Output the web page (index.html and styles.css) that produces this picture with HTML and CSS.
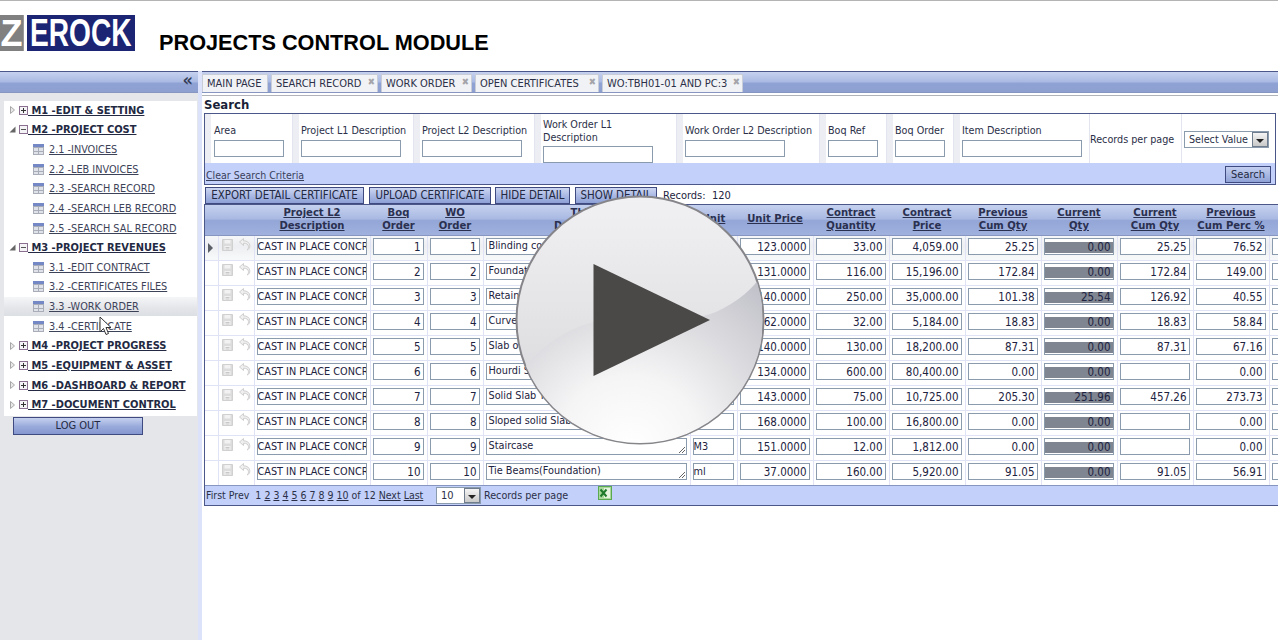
FILE: index.html
```html
<!DOCTYPE html>
<html lang="en">
<head>
<meta charset="utf-8">
<title>Projects Control Module</title>
<link rel="stylesheet" href="styles.css">
</head>
<body>
<svg class="defs" width="0" height="0" aria-hidden="true">
  <symbol id="i-table" viewBox="0 0 11 11"><rect width="11" height="11" fill="#a9adb8"/><rect width="11" height="3" fill="#7388c4"/><path d="M1 4h4v3H1zM6 4h4v3H6zM1 8h4v2H1zM6 8h4v2H6z" fill="#dfe2e8"/></symbol>
  <symbol id="i-plus" viewBox="0 0 9 9"><rect x=".5" y=".5" width="8" height="8" fill="#f4f4f6" stroke="#8b6f90"/><path d="M2 4.500h5M4.500 2v5" stroke="#333" stroke-width="1"/></symbol>
  <symbol id="i-minus" viewBox="0 0 9 9"><rect x=".5" y=".5" width="8" height="8" fill="#f4f4f6" stroke="#8b6f90"/><path d="M2 4.500h5" stroke="#555" stroke-width="1"/></symbol>
  <symbol id="i-closed" viewBox="0 0 5 8"><path d="M.5.5 4.500 4 .5 7.500z" fill="#e8e8e8" stroke="#a8a8a8"/></symbol>
  <symbol id="i-open" viewBox="0 0 7 7"><path d="M6.500.5v6h-6z" fill="#666"/></symbol>
  <symbol id="i-save" viewBox="0 0 11 12"><path d="M.5.5h10v11H.5z" fill="#dcdcdc" stroke="#d0d0d0"/><path d="M2.500 1h6v3.500h-6zM2.500 7h6v4h-6z" fill="#f2f2f2"/><path d="M3.500 8.500h4M3.500 10h4" stroke="#c8c8c8"/></symbol>
  <symbol id="i-undo" viewBox="0 0 13 14"><path d="M5.500 1.500 1.500 5l4 3.500V6.200c3 0 4.800 1 5 3.500.1 1.500-.6 2.700-1.500 3.300 2-.6 3-2.300 2.800-4.300C11.500 5.500 9 3.800 5.500 3.800z" fill="#f0f0f0" stroke="#cfcfcf"/></symbol>
  <symbol id="i-arrow" viewBox="0 0 5 10"><path d="M0 0l5 5-5 5z" fill="#5a5e66"/></symbol>
  <symbol id="i-grip" viewBox="0 0 9 9"><path d="M8 2 2 8M8 5 5 8" stroke="#666" stroke-width="1"/></symbol>
</svg>

<header class="top">
  <div class="logo"><span class="logo-z">Z</span><span class="logo-rest"><span class="logo-word">EROCK</span></span></div>
  <h1 class="title">PROJECTS CONTROL MODULE</h1>
</header>

<div class="app">
  <aside class="side">
    <div class="side-head">&laquo;</div>
    <nav class="tree">
      <a class="mod"><svg class="exp"><use href="#i-closed"/></svg><svg class="box"><use href="#i-plus"/></svg><span>&nbsp;M1 -EDIT &amp; SETTING</span></a>
      <a class="mod"><svg class="exp exp-o"><use href="#i-open"/></svg><svg class="box"><use href="#i-minus"/></svg><span>&nbsp;M2 -PROJECT COST</span></a>
      <a class="sub"><svg class="ti"><use href="#i-table"/></svg><span>2.1 -INVOICES</span></a>
      <a class="sub"><svg class="ti"><use href="#i-table"/></svg><span>2.2 -LEB INVOICES</span></a>
      <a class="sub"><svg class="ti"><use href="#i-table"/></svg><span>2.3 -SEARCH RECORD</span></a>
      <a class="sub"><svg class="ti"><use href="#i-table"/></svg><span>2.4 -SEARCH LEB RECORD</span></a>
      <a class="sub"><svg class="ti"><use href="#i-table"/></svg><span>2.5 -SEARCH SAL RECORD</span></a>
      <a class="mod"><svg class="exp exp-o"><use href="#i-open"/></svg><svg class="box"><use href="#i-minus"/></svg><span>&nbsp;M3 -PROJECT REVENUES</span></a>
      <a class="sub"><svg class="ti"><use href="#i-table"/></svg><span>3.1 -EDIT CONTRACT</span></a>
      <a class="sub"><svg class="ti"><use href="#i-table"/></svg><span>3.2 -CERTIFICATES FILES</span></a>
      <a class="sub hover"><svg class="ti"><use href="#i-table"/></svg><span>3.3 -WORK ORDER</span></a>
      <a class="sub"><svg class="ti"><use href="#i-table"/></svg><span>3.4 -CERTIFICATE</span></a>
      <a class="mod"><svg class="exp"><use href="#i-closed"/></svg><svg class="box"><use href="#i-plus"/></svg><span>&nbsp;M4 -PROJECT PROGRESS</span></a>
      <a class="mod"><svg class="exp"><use href="#i-closed"/></svg><svg class="box"><use href="#i-plus"/></svg><span>&nbsp;M5 -EQUIPMENT &amp; ASSET</span></a>
      <a class="mod"><svg class="exp"><use href="#i-closed"/></svg><svg class="box"><use href="#i-plus"/></svg><span>&nbsp;M6 -DASHBOARD &amp; REPORT</span></a>
      <a class="mod"><svg class="exp"><use href="#i-closed"/></svg><svg class="box"><use href="#i-plus"/></svg><span>&nbsp;M7 -DOCUMENT CONTROL</span></a>
    </nav>
    <div class="logout">LOG OUT</div>
  </aside>
  <div class="split"></div>

  <main class="main">
    <div class="tabs">
      <div class="tab t1">MAIN PAGE</div>
      <div class="tab t2">SEARCH RECORD<b class="x">&#10006;</b></div>
      <div class="tab t3">WORK ORDER<b class="x">&#10006;</b></div>
      <div class="tab t4">OPEN CERTIFICATES<b class="x">&#10006;</b></div>
      <div class="tab t5 active">WO:TBH01-01 AND PC:3<b class="x">&#10006;</b></div>
    </div>
    <div class="tabline"></div>

    <div class="content">
      <h2 class="search-title">Search</h2>
      <section class="search">
        <div class="filters">
          <div class="f"><label>Area</label><div class="in w70"></div></div>
          <div class="f"><label>Project L1 Description</label><div class="in w100"></div></div>
          <div class="f"><label>Project L2 Description</label><div class="in w100"></div></div>
          <div class="f f-low"><label>Work Order L1 Description</label><div class="in w110"></div></div>
          <div class="f"><label>Work Order L2 Description</label><div class="in w100"></div></div>
          <div class="f"><label>Boq Ref</label><div class="in w50"></div></div>
          <div class="f"><label>Boq Order</label><div class="in w50"></div></div>
          <div class="f"><label>Item Description</label><div class="in w120"></div></div>
          <div class="f-plain">Records per page</div>
          <div class="f-plain f-sel"><div class="sel"><span>Select Value</span><i class="sel-btn"></i></div></div>
        </div>
        <div class="search-foot"><a class="clear">Clear Search Criteria</a><div class="btn btn-search">Search</div></div>
      </section>

      <div class="actions">
        <div class="btn b1">EXPORT DETAIL CERTIFICATE</div>
        <div class="btn b2">UPLOAD CERTIFICATE</div>
        <div class="btn b3">HIDE DETAIL</div>
        <div class="btn b4">SHOW DETAIL</div>
        <span class="records">Records:&nbsp; 120</span>
      </div>

      <section class="grid">
        <table class="tbl">
          <colgroup><col class="c0"><col class="c1"><col class="c2"><col class="c3"><col class="c4"><col class="c5"><col class="c6"><col class="c7"><col class="c7"><col class="c7"><col class="c7"><col class="c7"><col class="c7"><col class="c7"><col class="c8"></colgroup>
          <thead><tr>
            <th></th><th></th><th><u>Project L2 <br>Description</u></th><th><u>Boq<br>Order</u></th><th><u>WO<br>Order</u></th><th><u>Thing<br>Description</u></th><th class="th-unit"><u>Unit</u></th><th><u>Unit Price</u></th><th><u>Contract <br>Quantity</u></th><th><u>Contract <br>Price</u></th><th><u>Previous <br>Cum Qty</u></th><th><u>Current <br>Qty</u></th><th><u>Current <br>Cum Qty</u></th><th><u>Previous <br>Cum Perc %</u></th><th></th>
          </tr></thead>
          <tbody>
            <tr class="sel-row"><td class="ar"><svg class="arw"><use href="#i-arrow"/></svg></td><td class="ic"><svg class="sv"><use href="#i-save"/></svg><svg class="un"><use href="#i-undo"/></svg></td><td><div class="fd fl">CAST IN PLACE CONCRETE</div></td><td><div class="fd">1</div></td><td><div class="fd">1</div></td><td><div class="fd ta">Blinding concrete<svg class="grip"><use href="#i-grip"/></svg></div></td><td><div class="fd fl"></div></td><td><div class="fd">123.0000</div></td><td><div class="fd">33.00</div></td><td><div class="fd">4,059.00</div></td><td><div class="fd">25.25</div></td><td><div class="fd cur">0.00</div></td><td><div class="fd">25.25</div></td><td><div class="fd">76.52</div></td><td><div class="fd"></div></td></tr>
            <tr><td></td><td class="ic"><svg class="sv"><use href="#i-save"/></svg><svg class="un"><use href="#i-undo"/></svg></td><td><div class="fd fl">CAST IN PLACE CONCRETE</div></td><td><div class="fd">2</div></td><td><div class="fd">2</div></td><td><div class="fd ta">Foundation<svg class="grip"><use href="#i-grip"/></svg></div></td><td><div class="fd fl"></div></td><td><div class="fd">131.0000</div></td><td><div class="fd">116.00</div></td><td><div class="fd">15,196.00</div></td><td><div class="fd">172.84</div></td><td><div class="fd cur">0.00</div></td><td><div class="fd">172.84</div></td><td><div class="fd">149.00</div></td><td><div class="fd"></div></td></tr>
            <tr><td></td><td class="ic"><svg class="sv"><use href="#i-save"/></svg><svg class="un"><use href="#i-undo"/></svg></td><td><div class="fd fl">CAST IN PLACE CONCRETE</div></td><td><div class="fd">3</div></td><td><div class="fd">3</div></td><td><div class="fd ta">Retaining<svg class="grip"><use href="#i-grip"/></svg></div></td><td><div class="fd fl"></div></td><td><div class="fd">140.0000</div></td><td><div class="fd">250.00</div></td><td><div class="fd">35,000.00</div></td><td><div class="fd">101.38</div></td><td><div class="fd cur">25.54</div></td><td><div class="fd">126.92</div></td><td><div class="fd">40.55</div></td><td><div class="fd"></div></td></tr>
            <tr><td></td><td class="ic"><svg class="sv"><use href="#i-save"/></svg><svg class="un"><use href="#i-undo"/></svg></td><td><div class="fd fl">CAST IN PLACE CONCRETE</div></td><td><div class="fd">4</div></td><td><div class="fd">4</div></td><td><div class="fd ta">Curved<svg class="grip"><use href="#i-grip"/></svg></div></td><td><div class="fd fl"></div></td><td><div class="fd">162.0000</div></td><td><div class="fd">32.00</div></td><td><div class="fd">5,184.00</div></td><td><div class="fd">18.83</div></td><td><div class="fd cur">0.00</div></td><td><div class="fd">18.83</div></td><td><div class="fd">58.84</div></td><td><div class="fd"></div></td></tr>
            <tr><td></td><td class="ic"><svg class="sv"><use href="#i-save"/></svg><svg class="un"><use href="#i-undo"/></svg></td><td><div class="fd fl">CAST IN PLACE CONCRETE</div></td><td><div class="fd">5</div></td><td><div class="fd">5</div></td><td><div class="fd ta">Slab on<svg class="grip"><use href="#i-grip"/></svg></div></td><td><div class="fd fl"></div></td><td><div class="fd">140.0000</div></td><td><div class="fd">130.00</div></td><td><div class="fd">18,200.00</div></td><td><div class="fd">87.31</div></td><td><div class="fd cur">0.00</div></td><td><div class="fd">87.31</div></td><td><div class="fd">67.16</div></td><td><div class="fd"></div></td></tr>
            <tr><td></td><td class="ic"><svg class="sv"><use href="#i-save"/></svg><svg class="un"><use href="#i-undo"/></svg></td><td><div class="fd fl">CAST IN PLACE CONCRETE</div></td><td><div class="fd">6</div></td><td><div class="fd">6</div></td><td><div class="fd ta">Hourdi S<svg class="grip"><use href="#i-grip"/></svg></div></td><td><div class="fd fl"></div></td><td><div class="fd">134.0000</div></td><td><div class="fd">600.00</div></td><td><div class="fd">80,400.00</div></td><td><div class="fd">0.00</div></td><td><div class="fd cur">0.00</div></td><td><div class="fd"></div></td><td><div class="fd">0.00</div></td><td><div class="fd"></div></td></tr>
            <tr><td></td><td class="ic"><svg class="sv"><use href="#i-save"/></svg><svg class="un"><use href="#i-undo"/></svg></td><td><div class="fd fl">CAST IN PLACE CONCRETE</div></td><td><div class="fd">7</div></td><td><div class="fd">7</div></td><td><div class="fd ta">Solid Slab T<svg class="grip"><use href="#i-grip"/></svg></div></td><td><div class="fd fl"></div></td><td><div class="fd">143.0000</div></td><td><div class="fd">75.00</div></td><td><div class="fd">10,725.00</div></td><td><div class="fd">205.30</div></td><td><div class="fd cur">251.96</div></td><td><div class="fd">457.26</div></td><td><div class="fd">273.73</div></td><td><div class="fd"></div></td></tr>
            <tr><td></td><td class="ic"><svg class="sv"><use href="#i-save"/></svg><svg class="un"><use href="#i-undo"/></svg></td><td><div class="fd fl">CAST IN PLACE CONCRETE</div></td><td><div class="fd">8</div></td><td><div class="fd">8</div></td><td><div class="fd ta">Sloped solid Slab<svg class="grip"><use href="#i-grip"/></svg></div></td><td><div class="fd fl"></div></td><td><div class="fd">168.0000</div></td><td><div class="fd">100.00</div></td><td><div class="fd">16,800.00</div></td><td><div class="fd">0.00</div></td><td><div class="fd cur">0.00</div></td><td><div class="fd"></div></td><td><div class="fd">0.00</div></td><td><div class="fd"></div></td></tr>
            <tr><td></td><td class="ic"><svg class="sv"><use href="#i-save"/></svg><svg class="un"><use href="#i-undo"/></svg></td><td><div class="fd fl">CAST IN PLACE CONCRETE</div></td><td><div class="fd">9</div></td><td><div class="fd">9</div></td><td><div class="fd ta">Staircase<svg class="grip"><use href="#i-grip"/></svg></div></td><td><div class="fd fl">M3</div></td><td><div class="fd">151.0000</div></td><td><div class="fd">12.00</div></td><td><div class="fd">1,812.00</div></td><td><div class="fd">0.00</div></td><td><div class="fd cur">0.00</div></td><td><div class="fd"></div></td><td><div class="fd">0.00</div></td><td><div class="fd"></div></td></tr>
            <tr><td></td><td class="ic"><svg class="sv"><use href="#i-save"/></svg><svg class="un"><use href="#i-undo"/></svg></td><td><div class="fd fl">CAST IN PLACE CONCRETE</div></td><td><div class="fd">10</div></td><td><div class="fd">10</div></td><td><div class="fd ta">Tie Beams(Foundation)<svg class="grip"><use href="#i-grip"/></svg></div></td><td><div class="fd fl">ml</div></td><td><div class="fd">37.0000</div></td><td><div class="fd">160.00</div></td><td><div class="fd">5,920.00</div></td><td><div class="fd">91.05</div></td><td><div class="fd cur">0.00</div></td><td><div class="fd">91.05</div></td><td><div class="fd">56.91</div></td><td><div class="fd"></div></td></tr>
          </tbody>
        </table>
        <div class="pager">
          <span class="pg">First Prev&nbsp; 1 <u>2</u> <u>3</u> <u>4</u> <u>5</u> <u>6</u> <u>7</u> <u>8</u> <u>9</u> <u>10</u> of 12 <u>Next</u> <u>Last</u></span>
          <div class="sel sel-pg"><span>10</span><i class="sel-btn"></i></div>
          <span class="pg-rec">Records per page</span>
          <svg class="xl" viewBox="0 0 14 14" width="14" height="14"><rect width="14" height="14" fill="#5aa84f"/><rect x="1" y="1" width="12" height="12" fill="#a9d79c"/><rect x="6" y="2" width="6" height="10" fill="#e6f4df"/><path d="M2.500 3.500l6 7M8.500 3.500l-6 7" stroke="#1f7a2c" stroke-width="2"/></svg>
        </div>
      </section>
    </div>
  </main>
</div>

<svg class="cursor" viewBox="0 0 13 20" width="13" height="20"><path d="M1 1v15l3.500-3.500 2.500 6 2.500-1-2.500-6H12z" fill="#fff" stroke="#333"/></svg>

<svg class="play" viewBox="0 0 256 256" width="256" height="256">
  <defs>
    <linearGradient id="pg1" x1="0" y1="0" x2="0" y2="1"><stop offset="0" stop-color="#f1f1f3"/><stop offset=".55" stop-color="#e2e2e5"/><stop offset="1" stop-color="#d4d4d9"/></linearGradient>
    <radialGradient id="pg2" gradientUnits="userSpaceOnUse" cx="118" cy="256" r="240"><stop offset="0" stop-color="#ffffff"/><stop offset=".3" stop-color="#f5f5f6"/><stop offset=".68" stop-color="#d2d2d7"/><stop offset="1" stop-color="#b4b4c0"/></radialGradient>
    <clipPath id="pc"><circle cx="128" cy="128" r="123"/></clipPath>
  </defs>
  <circle cx="128" cy="128" r="123.500" fill="url(#pg1)" stroke="#85858a" stroke-width="2"/>
  <path clip-path="url(#pc)" d="M14 174C38 146 62 134 90 128c35-4 86 4 114-8 22-10 38-24 46-38V256H0V188z" fill="url(#pg2)"/>
  <path d="M81.500 72 198 128 81.500 184z" fill="#4a4947"/>
</svg>
</body>
</html>
```

FILE: styles.css
```css
* { box-sizing: border-box; }
html, body { margin: 0; height: 640px; overflow: hidden; }
body {
  font-family: "DejaVu Sans Condensed", "DejaVu Sans", sans-serif;
  font-size: 11px;
  color: #1d2340;
  background: #fff;
  position: relative;
}
.defs { position: absolute; }

/* header */
.top {
  height: 71px;
  border-top: 1px solid #b4b4b4;
  display: flex;
  padding-top: 14px;
}
.logo { display: flex; height: 36px; width: 135px; gap: 3px; font-family: "Liberation Sans", sans-serif; font-weight: 700; color: #fff; font-size: 38px; line-height: 37px; flex: none; }
.logo-z { width: 24px; flex: none; background: #808080; text-align: center; border-right: 1px solid #9a9a9a; font-size: 36px; }
.logo-rest { width: 108px; flex: none; background: #1c2474; padding-left: 3px; }
.logo-word { display: block; width: 102px; transform: scaleX(.74); transform-origin: left center; }
.title { margin: 15px 0 0 24px; font-family: "Liberation Sans", sans-serif; font-weight: 700; font-size: 21.700px; line-height: 26px; color: #000; white-space: nowrap; }

.app { display: flex; height: 569px; }

/* sidebar */
.side { width: 198px; background: #e4e6e9; flex: none; }
.side-head {
  height: 22px;
  border-top: 1px solid #4a5788;
  border-bottom: 1px solid #8696c0;
  background: linear-gradient(#c6d1ef, #a9b9e2 50%, #8fa2d4 55%, #8ea0d0);
  text-align: right;
  padding-right: 5px;
  font-size: 18px;
  line-height: 16px;
  color: #333c58;
  font-weight: 700;
}
.tree { margin: 8px 1px 0 4px; background: #fff; height: 314.500px; }
.mod, .sub { display: flex; align-items: center; height: 19.640px; white-space: nowrap; position: relative; top: -.5px; }
.mod span { font-weight: 700; font-size: 11px; text-decoration: underline; color: #232942; }
.sub { padding-left: 29px; color: #3c4258; }
.sub span { text-decoration: underline; margin-left: 5px; font-size: 10.800px; }
.sub.hover { background: linear-gradient(#f5f6f7, #e3e5e9 60%, #dcdfe4); }
.exp { width: 5px; height: 8px; margin-left: 6px; }
.exp-o { width: 7px; height: 7px; margin-left: 5px; margin-right: -1px; }
.box { width: 9px; height: 9px; margin-left: 4px; }
.ti { width: 11px; height: 11px; }
.logout {
  margin: 1px 0 0 13px;
  width: 130px;
  height: 18px;
  border: 1px solid #3e4a80;
  background: linear-gradient(#c6d1ef, #98a9da 55%, #8497cf);
  text-align: center;
  line-height: 16px;
  color: #232942;
}
.split { width: 4px; flex: none; background: #dbe2fa; }

/* main */
.main { flex: 1; min-width: 0; overflow: hidden; }
.tabs {
  height: 22px;
  display: flex;
  align-items: flex-end;
  border-top: 1px solid #4a5788;
  border-bottom: 1px solid #8696c0;
  background: linear-gradient(#c6d1ef, #a9b9e2 50%, #8fa2d4 55%, #8ea0d0);
  gap: 3px;
  padding-top: 2px;
}
.tab {
  height: 18px;
  padding-left: 4px;
  background: #f1f2f5;
  border: 1px solid #c8cdd8;
  border-bottom: 0;
  line-height: 18px;
  position: relative;
  white-space: nowrap;
  color: #2b3048;
}
.t1 { width: 66px; } .t2 { width: 107px; } .t3 { width: 91px; } .t4 { width: 124px; } .t5 { width: 141px; }
.x { position: absolute; right: 2px; top: -2px; font-size: 9.500px; color: #a4a4aa; font-weight: 400; }
.tabline { height: 3px; border-bottom: 1px solid #b0b3b8; }
.content { padding-left: 2px; width: 1080px; }
.search-title { margin: 0; padding-top: 1px; font-size: 13px; line-height: 16px; font-weight: 700; color: #1a1f38; }

/* search */
.search { width: 1072px; border: 1px solid #4a5788; }
.filters { display: grid; grid-template-columns: 87px 121px 121px 142px 143px 67px 67px 136px 92px 93px; height: 49px; }
.f {
  padding: 11px 0 0 8px;
  display: flex;
  flex-direction: column;
  gap: 3px;
  background: linear-gradient(90deg, #eceef4 0 6px, transparent 6px);
  border-left: 1px solid #e2e5ef;
  min-width: 0;
}
.f:first-child { border-left: 0; padding-left: 9px; }
.f label { font-size: 10.700px; line-height: 12px; color: #2b3048; white-space: nowrap; }
.f-low { padding-top: 4px; gap: 2px; }
.f-low label { white-space: normal; line-height: 13px; width: 120px; }
.in { height: 17px; border: 1px solid #8a9bae; background: #fff; flex: none; }
.w50 { width: 50px; } .w70 { width: 70px; } .w100 { width: 100px; } .w110 { width: 110px; } .w120 { width: 120px; }
.f-plain { display: flex; align-items: center; padding-top: 1px; border-left: 1px solid #e2e5ef; white-space: nowrap; color: #2b3048; font-size: 10.700px; }
.f-sel { padding-left: 2px; padding-top: 2px; }
.sel { display: flex; align-items: center; justify-content: space-between; width: 85px; height: 17px; border: 1px solid #8a9bae; background: #fff; padding-left: 4px; }
.sel-btn { width: 16px; height: 15px; background: linear-gradient(#f4f4f4, #c9c9c9); border: 1px solid #6f7c8e; position: relative; flex: none; }
.sel-btn::after { content: ""; position: absolute; left: 3px; top: 6px; border-style: solid; border-color: #222 transparent transparent; border-width: 4px 4px 0; }
.search-foot { height: 21px; background: #c3d0f9; display: flex; align-items: center; justify-content: space-between; padding: 1px 4px 0 1px; }
.clear { text-decoration: underline; color: #39405c; font-size: 10.500px; padding-top: 1px; }
.btn {
  height: 17px;
  border: 1px solid #3e4a80;
  background: linear-gradient(#cdd6f2, #a7b6e2 55%, #8ea1d6);
  text-align: center;
  line-height: 15px;
  font-size: 11.400px;
  color: #232942;
  white-space: nowrap;
  flex: none;
}
.btn-search { width: 46px; background: linear-gradient(#c4cff0, #8fa2d6); font-size: 11px; }
.actions { display: flex; align-items: center; height: 18px; margin-top: 1px; padding-left: 1px; }
.b1 { width: 159px; } .b2 { width: 122px; margin-left: 5px; } .b3 { width: 75px; margin-left: 4px; } .b4 { width: 82px; margin-left: 5px; }
.records { margin-left: 6px; }

/* grid */
.grid { border: 1px solid #4a5788; border-right: 0; width: 1074px; overflow: hidden; }
.tbl { border-collapse: collapse; table-layout: fixed; width: 1073px; }
.c0 { width: 13px; } .c1 { width: 36px; } .c2 { width: 116px; } .c3 { width: 57px; } .c4 { width: 56px; } .c5 { width: 207px; } .c6 { width: 47px; } .c7 { width: 76px; } .c8 { width: 13px; }
thead tr { height: 30px; background: linear-gradient(#c6d1ef, #a9b9e2 46%, #93a6d7 52%, #a0b1de); }
th { padding: 0 0 2px; font-weight: 700; font-size: 11.200px; line-height: 13px; color: #2a3050; border-bottom: 1px solid #8696c0; white-space: nowrap; overflow: hidden; }
tbody tr { height: 25px; }
td { padding: 2.500px 3px 0 2px; border-right: 1px solid #dfe3f5; border-bottom: 1px solid #dfe3f5; vertical-align: top; overflow: hidden; }
.sel-row td { background: linear-gradient(#f6f7f9, #eceef1 45%, #f8f9fa); }
td.ar { padding: 7px 0 0 3px; }
td.ic { padding: 1px 0 0 3px; }
.arw { width: 5px; height: 10px; display: block; }
.sv { width: 11px; height: 12px; }
.un { width: 13px; height: 14px; margin-left: 5px; }
.fd { height: 17px; border: 1px solid #8a9bae; background: #fff; text-align: right; padding-right: 2px; line-height: 16px; color: #1d2340; overflow: hidden; white-space: nowrap; font-size: 11.500px; position: relative; }
.fl { text-align: left; padding: 0; font-size: 10.800px; }
.ta { text-align: left; padding: 0 0 0 2px; line-height: 13px; font-size: 10.800px; }
.grip { position: absolute; right: 0; bottom: 0; width: 9px; height: 9px; }
.cur { background: linear-gradient(#fff 3px, #7f8591 3px, #7f8591 14px, #fff 14px); }

/* pager */
.pager { height: 20px; margin-top: -1px; background: #c3d0f9; border-top: 1px solid #8696c0; display: flex; align-items: center; white-space: nowrap; padding-left: 1px; color: #2b3048; font-size: 10.500px; }
.pg { width: 230px; }
.sel-pg { width: 45px; font-size: 11px; }
.pg-rec { margin-left: 3px; font-size: 10.700px; }
.xl { margin: -5px 0 0 30px; }

/* overlays */
.cursor { position: absolute; left: 99px; top: 316px; }
.play { position: absolute; left: 512px; top: 192px; }
```
